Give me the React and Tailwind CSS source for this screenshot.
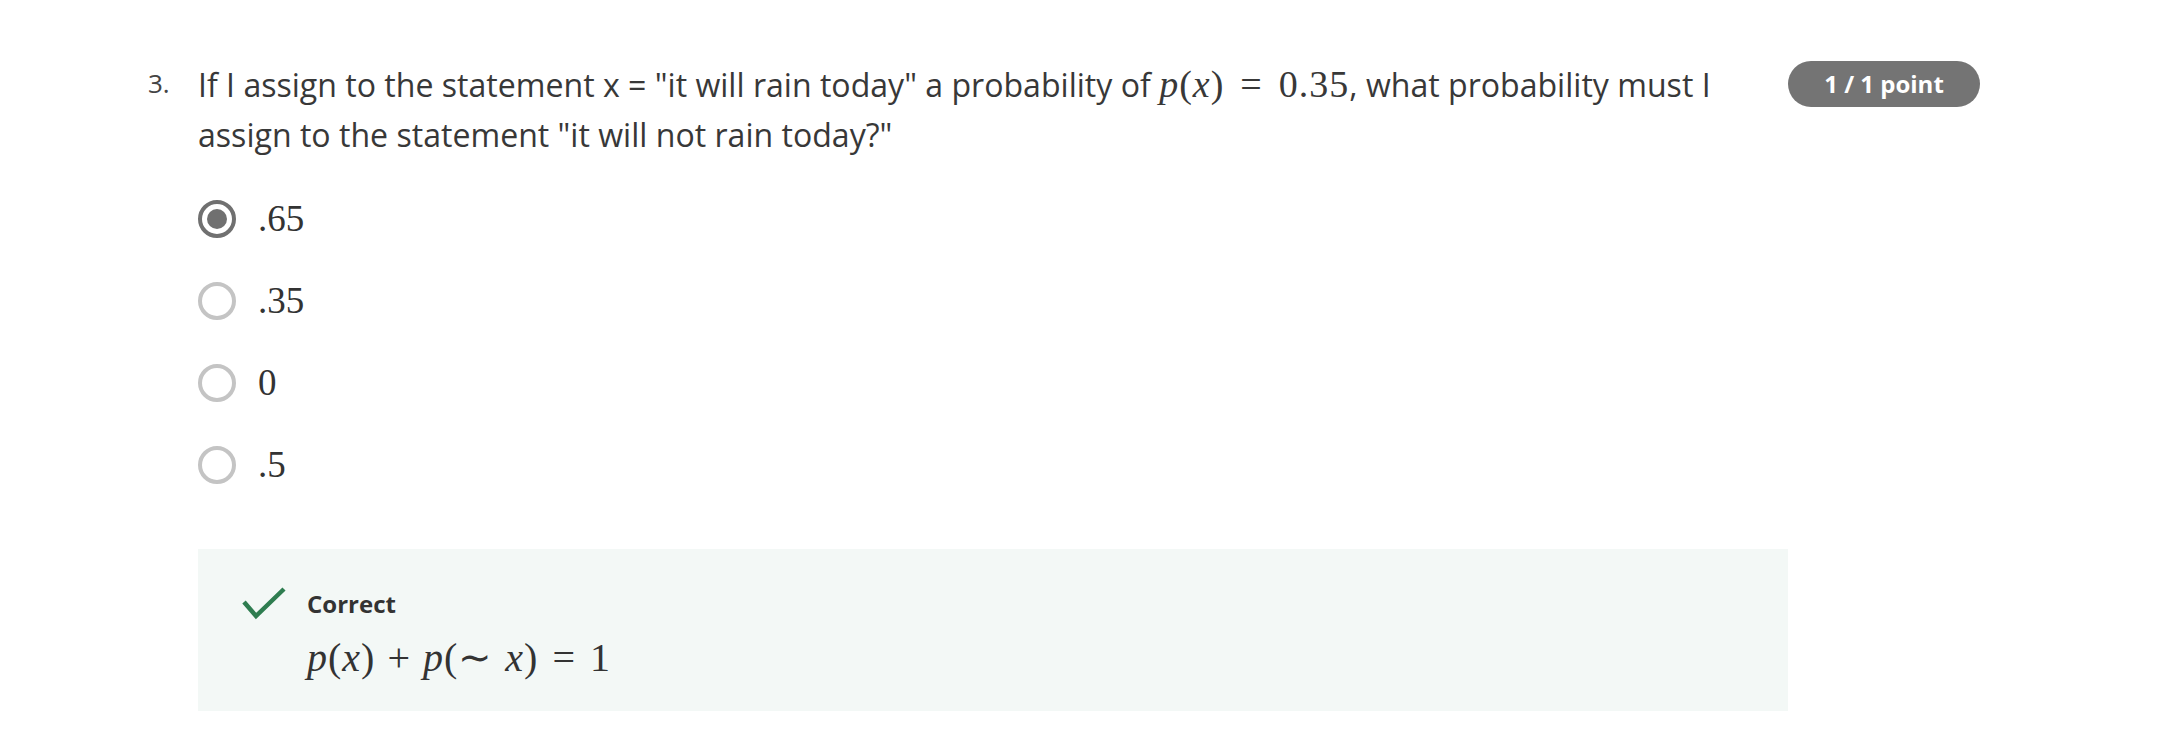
import React from "react";

const options = [".65", ".35", "0", ".5"];

const Radio = ({ checked }) =>
  checked ? (
    <span className="flex h-[38px] w-[38px] items-center justify-center rounded-full border-[4px] border-[#707070] bg-white">
      <span className="h-[20px] w-[20px] rounded-full bg-[#707070]" />
    </span>
  ) : (
    <span className="h-[38px] w-[38px] rounded-full border-[4px] border-[#c4c4c4] bg-white" />
  );

const App = () => {
  return (
    <div className="min-h-screen bg-white font-['Open_Sans',sans-serif] text-[#383838]">
      <div className="flex pl-[148px] pt-[59px]">
        {/* Number */}
        <div className="w-[50px] text-[26px] leading-[48px] text-[#444]">3.</div>

        {/* Question body */}
        <div className="w-[1590px]">
          <p className="text-[32.1px] leading-[50px]">
            If I assign to the statement x = "it will rain today" a probability of{" "}
            <span className="font-['Liberation_Serif',serif] text-[38px] tracking-[1px]">
              <i>p</i>(<i>x</i>)<span className="mx-[16px]">=</span>0.35
            </span>
            , what probability must I assign to the statement "it will not rain today?"
          </p>

          {/* Options */}
          <div className="mt-[18px]">
            {options.map((opt, i) => (
              <div key={opt} className="flex h-[82px] items-center">
                <Radio checked={i === 0} />
                <span className="ml-[22px] font-['Liberation_Serif',serif] text-[37px] text-[#333]">
                  {opt}
                </span>
              </div>
            ))}
          </div>

          {/* Feedback */}
          <div className="mt-[43px] h-[162px] bg-[#f3f8f6] pl-[44px] pt-[36px]">
            <div className="flex">
              <div className="flex h-[38px] w-[65px] items-center">
                <svg width="44" height="34" viewBox="0 0 44 34" fill="none">
                  <polyline points="2,15 14,29 42,2" stroke="#2e7d50" strokeWidth="4.5" />
                </svg>
              </div>
              <div>
                <div className="text-[24px] font-bold leading-[38px] text-[#333]">Correct</div>
                <div className="mt-[10px] font-['Liberation_Serif',serif] text-[40px] leading-[50px] tracking-[1px] text-[#333]">
                  <i>p</i>(<i>x</i>)<span className="mx-[12px]">+</span><i>p</i>(
                  <span className="mr-[12px]">∼</span>
                  <i>x</i>)<span className="mx-[14px]">=</span>1
                </div>
              </div>
            </div>
          </div>
        </div>

        {/* Points badge */}
        <div className="w-[192px] pt-[2px]">
          <div className="flex h-[46px] items-center justify-center rounded-full bg-[#747474] text-[24px] font-bold text-white">
            1 / 1 point
          </div>
        </div>
      </div>
    </div>
  );
};

export default App;
